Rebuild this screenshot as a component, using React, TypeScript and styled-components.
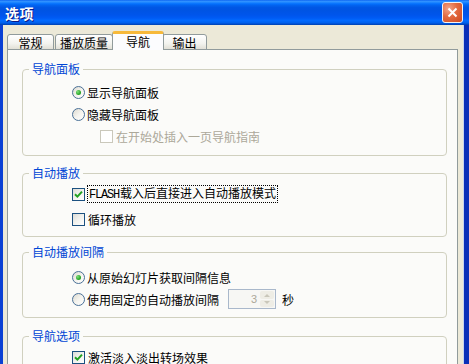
import React from 'react';
import styled, { createGlobalStyle } from 'styled-components';

const GlobalStyles = createGlobalStyle`
    html, body {
        margin: 0;
        padding: 0;
        background: #ece9d8;
    }
    body {
        font-family: 'Noto Sans CJK SC', 'Noto Sans', sans-serif;
        font-size: 12px;
        color: #000;
    }
`;

const Window = styled.div`
    width: 469px;
    height: 364px;
    overflow: hidden;
    display: flex;
    flex-direction: column;
    background: #ece9d8;
`;

const TitleBar = styled.div`
    height: 25px;
    flex-shrink: 0;
    display: flex;
    align-items: center;
    padding: 0 6px 0 5px;
    background: linear-gradient(
        to bottom,
        #0058ee 0%,
        #3593ff 4%,
        #288eff 8%,
        #127dff 12%,
        #036ffc 16%,
        #0262ee 22%,
        #0057e5 30%,
        #0054e3 40%,
        #0055eb 60%,
        #005bf5 72%,
        #026afe 82%,
        #0062ef 90%,
        #0052d6 95%,
        #0040ab 100%
    );
`;

const Title = styled.div`
    flex: 1;
    color: #fff;
    font-weight: bold;
    font-size: 14px;
    letter-spacing: 0.5px;
    padding-top: 1px;
    text-shadow: 1px 1px 0 #0a1883;
`;

const CloseButton = styled.div`
    width: 19px;
    height: 19px;
    border: 1px solid #f4f4f4;
    border-radius: 3px;
    display: flex;
    align-items: center;
    justify-content: center;
    background: radial-gradient(circle at 30% 30%, #f3a58a 0%, #e36a40 45%, #cc4a22 100%);
`;

const Frame = styled.div`
    flex: 1;
    display: flex;
    border-left: 3px solid #0a40d4;
    border-right: 5px solid #0a2fb8;
    box-shadow: inset -1px 0 0 #c5d3f0;
`;

const Body = styled.div`
    flex: 1;
    display: flex;
    flex-direction: column;
    padding: 7px 6px 0 4px;
`;

const TabRow = styled.div`
    display: flex;
    align-items: flex-end;
    height: 18px;
    position: relative;
    z-index: 1;
    margin-bottom: -1px;
`;

const Tab = styled.div<{ $active?: boolean; $width: number }>`
    width: ${(p) => p.$width}px;
    box-sizing: border-box;
    height: ${(p) => (p.$active ? 19 : 16)}px;
    margin: ${(p) => (p.$active ? '0 -2px' : '0 1px 0 0')};
    position: relative;
    z-index: ${(p) => (p.$active ? 2 : 1)};
    display: flex;
    align-items: center;
    justify-content: center;
    padding-bottom: ${(p) => (p.$active ? 2 : 0)}px;
    border: 1px solid #919b9c;
    border-bottom: ${(p) => (p.$active ? 'none' : '1px solid #919b9c')};
    border-radius: 3px 3px 0 0;
    border-top: ${(p) => (p.$active ? '3px solid #f7b93a' : '1px solid #919b9c')};
    background: ${(p) =>
        p.$active ? '#fcfcfe' : 'linear-gradient(to bottom, #ffffff 0%, #f3f3ef 60%, #e2e0d6 100%)'};
    font-size: 12px;
`;

const Panel = styled.div`
    flex: 1;
    border: 1px solid #919b9c;
    border-bottom: none;
    background: #fbfbf9;
    padding: 12px 10px 0 14px;
    display: flex;
    flex-direction: column;
`;

const Group = styled.fieldset<{ $gap?: number; $top?: number; $bottom?: number; $mt?: number }>`
    margin: ${(p) => p.$mt ?? 0}px 0 0 0;
    padding: ${(p) => p.$top ?? 4}px 0 ${(p) => p.$bottom ?? 7}px 0;
    border: 1px solid #d0d0bf;
    border-radius: 4px;
    display: flex;
    flex-direction: column;
    gap: ${(p) => p.$gap ?? 0}px;
    min-width: 0;
    flex-shrink: 0;
`;

const Legend = styled.legend`
    margin-left: 6px;
    padding: 0 3px;
    color: #0046d5;
    font-size: 12px;
    line-height: 14px;
`;

const Row = styled.div<{ $indent?: number; $disabled?: boolean }>`
    height: 22px;
    display: flex;
    align-items: center;
    padding-left: ${(p) => p.$indent ?? 49}px;
    color: ${(p) => (p.$disabled ? '#aca899' : '#000')};
`;

const Radio = styled.span<{ $checked?: boolean }>`
    width: 13px;
    height: 13px;
    box-sizing: border-box;
    border-radius: 50%;
    border: 1px solid #4a7097;
    background: linear-gradient(135deg, #dcd9cf 0%, #f4f3ee 50%, #ffffff 100%);
    margin-right: 2px;
    display: flex;
    align-items: center;
    justify-content: center;
    flex-shrink: 0;

    &::after {
        content: '';
        display: ${(p) => (p.$checked ? 'block' : 'none')};
        width: 5px;
        height: 5px;
        border-radius: 50%;
        background: radial-gradient(circle at 35% 35%, #7fe07a 0%, #2aa72a 60%, #1b8a1b 100%);
    }
`;

const CheckBox = styled.span<{ $disabled?: boolean }>`
    width: 13px;
    height: 13px;
    box-sizing: border-box;
    border: 1px solid ${(p) => (p.$disabled ? '#cac8bb' : '#1c5180')};
    background: ${(p) =>
        p.$disabled ? '#ffffff' : 'linear-gradient(135deg, #dcdcd7 0%, #f2f2ee 50%, #ffffff 100%)'};
    margin-right: 3px;
    display: flex;
    align-items: center;
    justify-content: center;
    flex-shrink: 0;
`;

const Focus = styled.span`
    outline: 1px dotted #000;
    outline-offset: 0;
    padding: 0 1px;
    line-height: 14px;
`;

const Latin = styled.span`
    font-family: 'Liberation Mono', monospace;
    font-size: 12px;
    letter-spacing: -1.2px;
    margin-right: 1px;
`;

const Spinner = styled.div`
    width: 48px;
    height: 20px;
    box-sizing: border-box;
    margin-left: 9px;
    border: 1px solid #a9b8cb;
    background: #f7f7f4;
    display: flex;
    align-items: stretch;
`;

const SpinValue = styled.div`
    flex: 1;
    display: flex;
    align-items: center;
    justify-content: flex-end;
    padding-right: 3px;
    color: #aca899;
    font-family: 'Liberation Sans', sans-serif;
    font-size: 11px;
`;

const SpinButtons = styled.div`
    width: 14px;
    display: flex;
    flex-direction: column;
    gap: 1px;
    padding: 1px 1px 1px 0;
`;

const SpinButton = styled.div`
    flex: 1;
    border-radius: 2px;
    background: #eeede5;
    display: flex;
    align-items: center;
    justify-content: center;
`;

const Unit = styled.span`
    margin-left: 6px;
`;

const Check = () => (
    <svg width="9" height="9" viewBox="0 0 9 9">
        <path d="M1 4.2 L3.4 6.6 L8 1.6" fill="none" stroke="#21a121" strokeWidth="2" />
    </svg>
);

const Arrow = ({ up }: { up?: boolean }) => (
    <svg width="6" height="4" viewBox="0 0 6 4">
        <path d={up ? 'M0 4 L3 1 L6 4 Z' : 'M0 0 L3 3 L6 0 Z'} fill="#c9c7ba" />
    </svg>
);

function App() {
    return (
        <Window>
            <GlobalStyles />
            <TitleBar>
                <Title>选项</Title>
                <CloseButton>
                    <svg width="11" height="11" viewBox="0 0 11 11">
                        <path d="M1.5 1.5 L9.5 9.5 M9.5 1.5 L1.5 9.5" stroke="#fff" strokeWidth="2" />
                    </svg>
                </CloseButton>
            </TitleBar>
            <Frame>
                <Body>
                    <TabRow>
                        <Tab $width={47}>常规</Tab>
                        <Tab $width={58}>播放质量</Tab>
                        <Tab $width={52} $active>导航</Tab>
                        <Tab $width={45}>输出</Tab>
                    </TabRow>
                    <Panel>
                        <Group $top={5} $bottom={8}>
                            <Legend>导航面板</Legend>
                            <Row>
                                <Radio $checked />
                                显示导航面板
                            </Row>
                            <Row>
                                <Radio />
                                隐藏导航面板
                            </Row>
                            <Row $indent={77} $disabled>
                                <CheckBox $disabled />
                                在开始处插入一页导航指南
                            </Row>
                        </Group>
                        <Group $mt={10} $top={3} $gap={3} $bottom={6}>
                            <Legend>自动播放</Legend>
                            <Row>
                                <CheckBox>
                                    <Check />
                                </CheckBox>
                                <Focus>
                                    <Latin>FLASH</Latin>载入后直接进入自动播放模式
                                </Focus>
                            </Row>
                            <Row>
                                <CheckBox />
                                循环播放
                            </Row>
                        </Group>
                        <Group $mt={8} $top={7}>
                            <Legend>自动播放间隔</Legend>
                            <Row>
                                <Radio $checked />
                                从原始幻灯片获取间隔信息
                            </Row>
                            <Row>
                                <Radio />
                                使用固定的自动播放间隔
                                <Spinner>
                                    <SpinValue>3</SpinValue>
                                    <SpinButtons>
                                        <SpinButton>
                                            <Arrow up />
                                        </SpinButton>
                                        <SpinButton>
                                            <Arrow />
                                        </SpinButton>
                                    </SpinButtons>
                                </Spinner>
                                <Unit>秒</Unit>
                            </Row>
                        </Group>
                        <Group $mt={11} $top={3}>
                            <Legend>导航选项</Legend>
                            <Row>
                                <CheckBox>
                                    <Check />
                                </CheckBox>
                                激活淡入淡出转场效果
                            </Row>
                        </Group>
                    </Panel>
                </Body>
            </Frame>
        </Window>
    );
}

export default App;
